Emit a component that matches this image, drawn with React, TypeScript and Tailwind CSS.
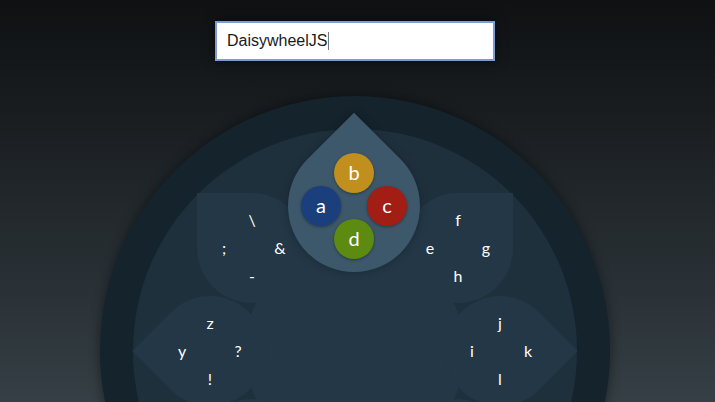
import React from 'react';

type Petal = {
  dx: number;
  dy: number;
  rot: string;
  keys: string[];
};

// key slots: left, top, right, bottom
const slots = [
  [-1, 0],
  [0, -1],
  [1, 0],
  [0, 1],
];

const petals: Petal[] = [
  { dx: -103, dy: -103, rot: 'rotate-0', keys: [';', '\\', '&', '-'] },
  { dx: 103, dy: -103, rot: 'rotate-90', keys: ['e', 'f', 'g', 'h'] },
  { dx: 145, dy: 0, rot: 'rotate-[135deg]', keys: ['i', 'j', 'k', 'l'] },
  { dx: 103, dy: 103, rot: 'rotate-180', keys: ['m', 'n', 'o', 'p'] },
  { dx: 0, dy: 145, rot: '-rotate-[135deg]', keys: ['q', 'r', 's', 't'] },
  { dx: -103, dy: 103, rot: '-rotate-90', keys: ['u', 'v', 'w', 'x'] },
  { dx: -145, dy: 0, rot: '-rotate-45', keys: ['y', 'z', '?', '!'] },
];

const buttons = [
  { key: 'a', color: 'bg-[#1b3f7c]' },
  { key: 'b', color: 'bg-[#c18f1d]' },
  { key: 'c', color: 'bg-[#a21d13]' },
  { key: 'd', color: 'bg-[#5d8a10]' },
];

const C = 255;

export default function App() {
  return (
    <div className="w-full h-screen overflow-hidden bg-linear-to-b from-[#0f1113] to-[#353f45]">
      <div className="w-[710px] flex flex-col items-center pt-[21px]">
        {/* text field */}
        <div className="w-[280px] h-[40px] bg-white border-2 border-[#7f9bd3] shadow-[0_0_10px_rgba(0,0,0,0.6)] flex items-center pl-[10px] font-['Liberation_Sans',Arial,sans-serif] text-[16px] text-[#1a1a1a]">
          <span>DaisywheelJS</span>
          <span className="w-px h-[18px] bg-[#777] ml-px" />
        </div>

        {/* wheel */}
        <div className="relative mt-[35px] w-[510px] h-[510px] shrink-0 rounded-full bg-[#15232d] shadow-[0_0_12px_rgba(0,0,0,0.45)] font-['Lato','Open_Sans',sans-serif] text-white">
          <div className="absolute inset-[33px] rounded-full bg-[#1f303d]" />
          <div className="absolute inset-[145px] rounded-full bg-[#233746]" />

          {petals.map((p, i) => (
            <div key={i} className="absolute w-0 h-0" style={{ left: C + p.dx, top: C + p.dy }}>
              <div className={`absolute -left-[55px] -top-[55px] w-[110px] h-[110px] rounded-[0_50%_50%_50%] bg-[#233746] ${p.rot}`} />
              {p.keys.map((k, j) => (
                <span
                  key={j}
                  className="absolute -translate-x-1/2 -translate-y-1/2 text-[16px] leading-none"
                  style={{ left: slots[j][0] * 28, top: slots[j][1] * 28 }}
                >
                  {k}
                </span>
              ))}
            </div>
          ))}

          {/* active petal */}
          <div className="absolute w-0 h-0 z-10" style={{ left: C - 1, top: C - 145 }}>
            <div className="absolute -left-[66px] -top-[66px] w-[132px] h-[132px] rounded-[0_50%_50%_50%] bg-[#3c586a] rotate-45 shadow-[0_0_8px_rgba(0,0,0,0.25)]" />
            {buttons.map((b, j) => (
              <div
                key={b.key}
                className={`absolute -translate-x-1/2 -translate-y-1/2 w-[40px] h-[40px] rounded-full ${b.color} shadow-[0_1px_3px_rgba(0,0,0,0.35)] flex items-center justify-center text-[20px] leading-none pb-[2px]`}
                style={{ left: slots[j][0] * 33, top: slots[j][1] * 33 }}
              >
                {b.key}
              </div>
            ))}
          </div>
        </div>
      </div>
    </div>
  );
}
